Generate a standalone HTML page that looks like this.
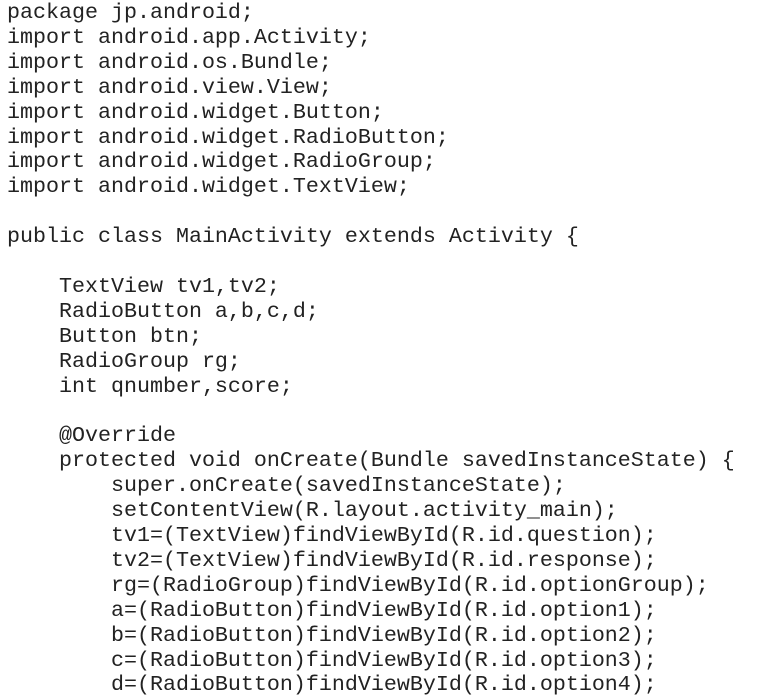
<!DOCTYPE html>
<html><head><meta charset="utf-8"><style>
html,body{margin:0;padding:0;background:#fff;width:759px;height:699px;overflow:hidden}
pre{margin:0;position:absolute;left:7px;top:1px;font-family:"Liberation Mono","Courier New",monospace;font-size:21.67px;line-height:24.9px;color:#222;white-space:pre}
</style></head><body><pre>package jp.android;
import android.app.Activity;
import android.os.Bundle;
import android.view.View;
import android.widget.Button;
import android.widget.RadioButton;
import android.widget.RadioGroup;
import android.widget.TextView;

public class MainActivity extends Activity {

    TextView tv1,tv2;
    RadioButton a,b,c,d;
    Button btn;
    RadioGroup rg;
    int qnumber,score;

    @Override
    protected void onCreate(Bundle savedInstanceState) {
        super.onCreate(savedInstanceState);
        setContentView(R.layout.activity_main);
        tv1=(TextView)findViewById(R.id.question);
        tv2=(TextView)findViewById(R.id.response);
        rg=(RadioGroup)findViewById(R.id.optionGroup);
        a=(RadioButton)findViewById(R.id.option1);
        b=(RadioButton)findViewById(R.id.option2);
        c=(RadioButton)findViewById(R.id.option3);
        d=(RadioButton)findViewById(R.id.option4);
</pre></body></html>
